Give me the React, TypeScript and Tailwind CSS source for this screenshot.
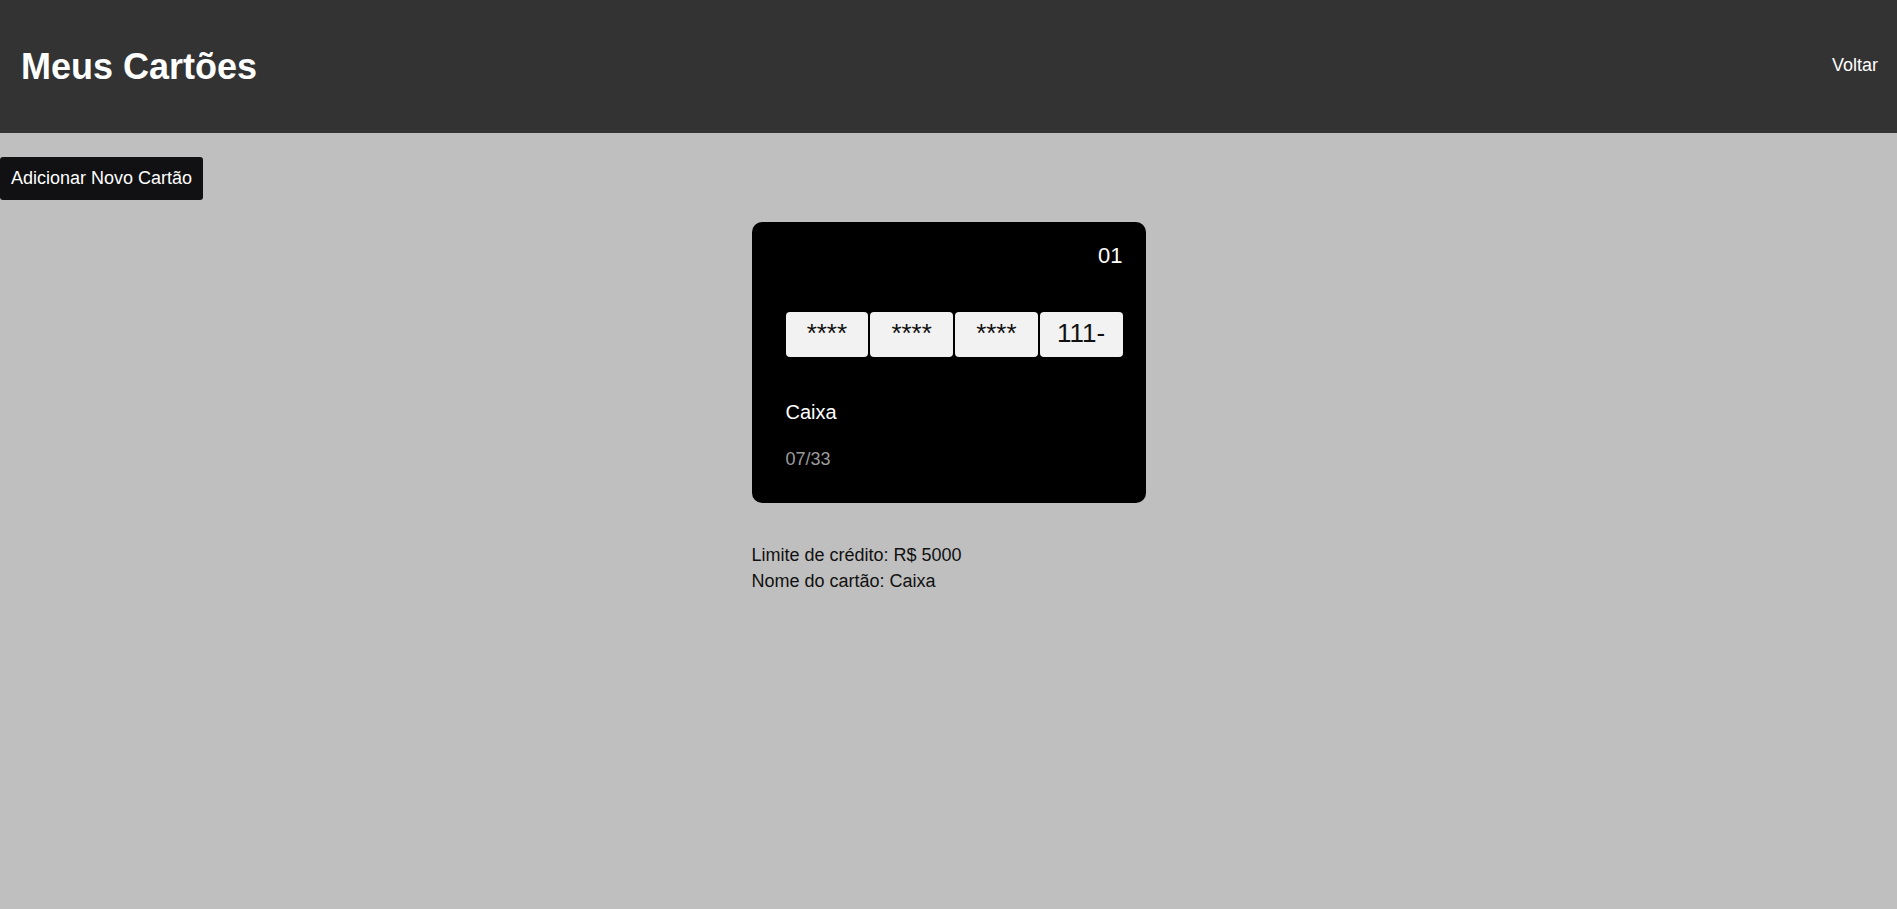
import React from 'react';

// --- Data ---
type Card = {
  id: string;
  blocks: string[];
  name: string;
  expiry: string;
  limit: number;
};

const cards: Card[] = [
  { id: '01', blocks: ['****', '****', '****', '111-'], name: 'Caixa', expiry: '07/33', limit: 5000 },
];

const font = "font-['Liberation_Sans',Arial,sans-serif]";

const CardItem: React.FC<{ card: Card }> = ({ card }) => (
  <div className="w-[394px] flex flex-col">
    <div className="w-full h-[281px] rounded-[10px] bg-black pt-[21px] pl-[34px] pr-[23px] flex flex-col">
      <div className="text-right text-[22px] text-white">{card.id}</div>

      <div className="mt-[44px] flex gap-[2px]">
        {card.blocks.map((b, i) => (
          <div
            key={i}
            className="flex-1 h-[45px] pt-[7px] rounded-[4px] bg-[#f2f2f2] text-center text-[26px] text-[#111]"
          >
            {b}
          </div>
        ))}
      </div>

      <div className="mt-[44px] text-[20px] text-white">{card.name}</div>
      <div className="mt-[25px] text-[18px] text-[#9c9c9c]">{card.expiry}</div>
    </div>

    <div className="mt-[39px] text-[18px] leading-[26px] text-[#111]">
      <div>Limite de crédito: R$ {card.limit}</div>
      <div>Nome do cartão: {card.name}</div>
    </div>
  </div>
);

export default function App() {
  return (
    <div className={`min-h-screen bg-[#bfbfbf] leading-[1.15] ${font}`}>
      <header className="h-[133px] bg-[#333333] pl-[21px] pr-[19px] flex items-center justify-between text-white">
        <h1 className="text-[36px] font-bold">Meus Cartões</h1>
        <a className="text-[18px] cursor-pointer mb-[3px]">Voltar</a>
      </header>

      <div className="mt-[24px]">
        <button className="px-[11px] py-[11px] rounded-[3px] bg-[#111113] text-white text-[18px] leading-[1.15]">
          Adicionar Novo Cartão
        </button>
      </div>

      <div className="mt-[22px] flex flex-col items-center gap-8">
        {cards.map((c) => (
          <CardItem key={c.id} card={c} />
        ))}
      </div>
    </div>
  );
}
